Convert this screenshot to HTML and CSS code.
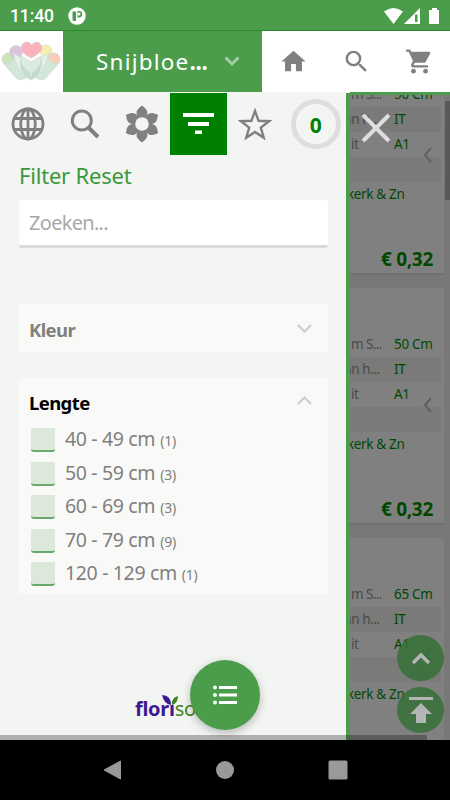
FILE: index.html
```html
<!DOCTYPE html>
<html lang="nl">
<head>
<meta charset="utf-8">
<title>Snijbloemen</title>
<link rel="stylesheet" href="styles.css">
</head>
<body>
<div class="status">
  <span class="clock">11:40</span>
  <svg class="app-dot" width="18" height="18" viewBox="0 0 18 18"><circle cx="9" cy="9" r="8.700" fill="#fff"/><path d="M4.500 4.500H8V14H6Q4.500 14 4.500 12.500ZM9.500 4H11a3.200 3.200 0 0 1 0 6.400H9.500Z" fill="#4b9d4b"/><circle cx="11" cy="7" r="1.500" fill="#fff"/></svg>
  <svg class="signals" width="56" height="18" viewBox="0 0 56 18" fill="#fff"><path d="M0 4.500Q9.500-2.500 19 4.500L9.500 17ZM20 17 36 1V17Z"/><path d="M31 7.500h2.500V15H31Z" fill="#4b9d4b"/><path d="M45 3h3V1h5v2h2v14H45Z"/></svg>
</div>
<header class="header">
  <div class="logo">
    <svg width="60" height="42" viewBox="0 0 60 42" stroke="#c9d5cc" stroke-width=".6">
      <circle cx="7" cy="18" r="6" fill="#cde3b8"/><circle cx="15" cy="11" r="6.500" fill="#dbc2de"/><circle cx="45" cy="10" r="6" fill="#f7efad"/><circle cx="53" cy="18" r="6" fill="#f9cdb8"/>
      <path d="M2 22 16 38Q24 40 27 34L12 17Q12 23 2 22ZM58 22 44 38Q36 40 33 34L48 17Q48 23 58 22Z" fill="#d3e6da"/>
      <path d="M12 12Q27 18 29 38Q18 35 12 12ZM48 12Q33 18 31 38Q42 35 48 12Z" fill="#e5f0e8"/>
      <path d="M20 18Q17 31 30 39Q43 31 40 18L30 24Z" fill="#c1ddcb"/>
      <path d="M30 21 40 15Q42 25 31 32V36H29V32Q18 25 20 15Z" fill="#dcece1"/>
      <path d="M30 17Q20 12 20 7Q21 1 26 1Q29 1 30.500 4Q33 1 36 1Q41 2 41 8Q40 12 30 17Z" fill="#fab1bb"/>
    </svg>
  </div>
  <div class="category"><span class="category-name">Snijbloe<b>...</b></span>
    <svg width="16" height="11" viewBox="0 0 16 11"><path d="m1.500 1.500 6.500 6.500 6.500-6.500" fill="none" stroke="#a3cda3" stroke-width="3"/></svg>
  </div>
  <nav class="tools">
    <svg width="29" height="29" viewBox="0 0 24 24"><path d="M10 20v-6h4v6h5v-8h3L12 3 2 12h3v8z"/></svg>
    <svg width="29" height="29" viewBox="0 0 24 24"><path d="M15.500 14h-.790l-.280-.270A6.470 6.470 0 0 0 16 9.500 6.500 6.500 0 1 0 9.500 16c1.610 0 3.090-.590 4.230-1.570l.270.280v.790l5 4.990L20.490 19zm-6 0a4.500 4.500 0 1 1 0-9 4.500 4.500 0 0 1 0 9"/></svg>
    <svg width="29" height="29" viewBox="0 0 24 24"><circle cx="7" cy="20" r="2"/><circle cx="17" cy="20" r="2"/><path d="M1 2v2h2l3.600 7.590-1.350 2.450C4.520 15.370 5.480 17 7 17h12v-2H7.420a.25.25 0 0 1-.25-.25L8.100 13h7.450c.75 0 1.410-.41 1.750-1.030l3.580-6.490A1 1 0 0 0 20 4H5.210l-.94-2z"/></svg>
  </nav>
</header>
<main class="main">
  <aside class="drawer">
    <div class="tabs">
      <div class="tab"><svg width="34" height="34" viewBox="0 0 34 34" fill="none" stroke="#808080" stroke-width="2.800"><circle cx="17" cy="17" r="15"/><ellipse cx="17" cy="17" rx="7.300" ry="15"/><path d="M17 2v30M3.500 11.500h27M3.500 22.500h27"/></svg></div>
      <div class="tab"><svg width="30" height="30" viewBox="0 0 30 30" fill="none" stroke="#808080"><circle cx="11.800" cy="11.500" r="9.500" stroke-width="3"/><path d="m18.500 18.500 9.500 9.500" stroke-width="4"/></svg></div>
      <div class="tab"><svg width="36" height="38" viewBox="-18 -19 36 38" fill="#808080"><path id="p" d="M-4-7C-8-13-3-16 0-18.500C3-16 8-13 4-7L0 0Z"/><use href="#p" transform="rotate(60)"/><use href="#p" transform="rotate(120)"/><use href="#p" transform="rotate(180)"/><use href="#p" transform="rotate(240)"/><use href="#p" transform="rotate(300)"/><circle r="10"/><circle r="6.800" fill="#f3f5f3"/></svg></div>
      <div class="tab active"><svg width="31" height="22" viewBox="0 0 31 22" fill="#fff"><path d="M0 0h31v4H0zM5 9h21v4H5zM12 17.500h7v3.500h-7z"/></svg></div>
      <div class="tab"><svg width="34" height="32" viewBox="0 0 34 32"><path d="m17 3 3.600 9.800 10.400.4-8.200 6.400 3 10.200L17 24l-8.800 5.800 3-10.200L3 13.200l10.400-.4Z" fill="none" stroke="#808080" stroke-width="2.400"/></svg></div>
      <div class="tab last"><span class="count">0</span></div>
    </div>
    <div class="filters">
      <a class="reset">Filter Reset</a>
      <input class="search" placeholder="Zoeken...">
      <section class="group closed"><h2>Kleur</h2><svg width="15" height="9" viewBox="0 0 15 9"><path d="m1 1 6.500 6.500L14 1"/></svg></section>
      <section class="group open">
        <div class="group-head"><h2>Lengte</h2><svg width="15" height="9" viewBox="0 0 15 9"><path d="m1 8 6.500-6.500L14 8"/></svg></div>
        <label class="option"><i></i><span>40 - 49 cm</span><small>(1)</small></label>
        <label class="option"><i></i><span>50 - 59 cm</span><small>(3)</small></label>
        <label class="option"><i></i><span>60 - 69 cm</span><small>(3)</small></label>
        <label class="option"><i></i><span>70 - 79 cm</span><small>(9)</small></label>
        <label class="option"><i></i><span>120 - 129 cm</span><small>(1)</small></label>
      </section>
    </div>
    <div class="brand"><span>florı</span><span class="soft">so</span>
      <svg class="leaf" width="17" height="12" viewBox="0 0 17 12"><path d="M0 0Q9 0 9 10Q2 9 0 0Z" fill="#3d1a91"/><path d="M10 10Q9 3 16 1Q16 8 10 10Z" fill="#3c861c"/></svg>
    </div>
  </aside>
  <div class="catalog">
    <article class="card">
      <div class="row"><span>m S...</span><b>50 Cm</b></div><div class="row"><span class="cut">an h...</span><b>IT</b></div><div class="row"><span>it</span><b>A1</b></div><div class="row"></div>
      <div class="grower">kerk &amp; Zn</div><div class="price">€ 0,32</div>
      <svg class="prev" width="9" height="16" viewBox="0 0 9 16"><path d="M8 1 2 8l6 7"/></svg>
    </article>
    <article class="card">
      <div class="row"><span>m S...</span><b>50 Cm</b></div><div class="row"><span class="cut">an h...</span><b>IT</b></div><div class="row"><span>it</span><b>A1</b></div><div class="row"></div>
      <div class="grower">kerk &amp; Zn</div><div class="price">€ 0,32</div>
      <svg class="prev" width="9" height="16" viewBox="0 0 9 16"><path d="M8 1 2 8l6 7"/></svg>
    </article>
    <article class="card">
      <div class="row"><span>m S...</span><b>65 Cm</b></div><div class="row"><span class="cut">an h...</span><b>IT</b></div><div class="row"><span>it</span><b>A1</b></div><div class="row"></div>
      <div class="grower">kerk &amp; Zn</div>
      <svg class="prev" width="9" height="16" viewBox="0 0 9 16"><path d="M8 1 2 8l6 7"/></svg>
    </article>
    <div class="scroll-y"></div>
  </div>
  <svg class="close" width="30" height="30" viewBox="0 0 30 30"><path d="m2 2 26 26M28 2 2 28" stroke="#dedede" stroke-width="4"/></svg>
  <div class="jump">
    <span><svg width="20" height="13" viewBox="0 0 20 13"><path d="m2 11 8-8 8 8" fill="none" stroke="#b5b5b5" stroke-width="3.500"/></svg></span>
    <span><svg width="24" height="27" viewBox="0 0 24 27"><path d="M0 0h24v3H0zM12 6l11 11h-6v9H7v-9H1z" fill="#b5b5b5"/></svg></span>
  </div>
  <div class="fab"><svg width="24" height="20" viewBox="0 0 24 20" fill="#fff"><circle cx="2" cy="2.500" r="2"/><circle cx="2" cy="10" r="2"/><circle cx="2" cy="17.500" r="2"/><path d="M6 1h18v3H6zM6 8.500h18v3H6zM6 16h18v3H6z"/></svg></div>
  <div class="scroll-x"></div>
</main>
<footer class="android">
  <svg width="20" height="22" viewBox="0 0 20 22"><path d="M18.500 2v18L2 11Z" stroke="#999" stroke-linejoin="round"/></svg>
  <svg width="20" height="20" viewBox="0 0 20 20"><circle cx="10" cy="10" r="9"/></svg>
  <svg width="20" height="20" viewBox="0 0 20 20"><rect x=".5" y=".5" width="19" height="19" rx="1.500"/></svg>
</footer>
</body>
</html>
```
FILE: styles.css
```css
* { box-sizing: border-box; }
body { margin: 0; width: 450px; height: 800px; overflow: hidden; display: flex; flex-direction: column; background: #4b9d4b; font-family: "Noto Sans", sans-serif; color: #808080; }
svg { display: block; flex: none; }
.status { height: 30px; flex: none; display: flex; align-items: center; padding: 1px 10px 0; color: #fff; }
.clock { font: 500 17.5px/28px Roboto, sans-serif; letter-spacing: -.1px; width: 58px; }
.signals { margin-left: auto; }
.header { height: 62px; flex: none; display: flex; border-top: 1px solid #2c8a2c; }
.logo { width: 63px; background: #fff; display: flex; align-items: center; padding-left: 1px; }
.category { width: 199px; color: #fff; display: flex; align-items: center; padding: 0 0 1px 33px; }
.category-name { font-size: 22.5px; letter-spacing: 1.2px; width: 128px; white-space: nowrap; }
.category-name b { letter-spacing: -.3px; }
.tools { flex: 1; background: #fff; display: flex; align-items: center; padding-left: 17px; gap: 34px; fill: #808080; }
.main { position: relative; height: 648px; flex: none; display: flex; border-top: 1px solid #f3f5f3; }
.drawer { width: 350px; border-right: 4px solid #4b9d4b; background: #f3f5f3; display: flex; flex-direction: column; }
.tabs { display: flex; height: 62px; flex: none; }
.tab { width: 56.7px; flex: none; display: flex; align-items: center; justify-content: center; }
.tab.active { background: #008000; }
.tab.last { width: 62.5px; padding-left: 2px; }
.count { width: 50px; height: 50px; border: 5px solid #dedede; border-radius: 50%; color: #008000; font-size: 21px; font-weight: 700; line-height: 43px; text-align: center; }
.filters { padding: 0 18px 0 19px; display: flex; flex-direction: column; }
.reset { color: #3b973b; font-size: 22px; line-height: 40px; height: 45px; letter-spacing: -.2px; }
.search { height: 48px; border: 0; border-bottom: 3px solid #d9dad9; border-radius: 3px; background: #fff; padding: 0 10px; font: 20px "Noto Sans", sans-serif; letter-spacing: -.7px; }
.search::placeholder { color: #a8a8a8; }
.group { background: #f9faf8; }
.group h2 { margin: 0; font-size: 18.5px; letter-spacing: -.6px; }
.group svg { fill: none; stroke: #cbcccb; stroke-width: 2; }
.closed, .group-head { display: flex; justify-content: space-between; padding: 0 16px 0 10px; }
.closed { height: 48px; margin-top: 56px; line-height: 52px; }
.closed svg { margin-top: 20px; }
.open { height: 216px; margin-top: 26px; }
.group-head { height: 45px; line-height: 50px; color: #000; }
.group-head svg { margin-top: 18px; }
.option { display: flex; height: 33.6px; padding-left: 12px; align-items: baseline; }
.option i { width: 24px; height: 24px; flex: none; align-self: flex-start; margin: 5px 10px 0 0; background: #dce9da; border-bottom: 2px solid #6ba86b; border-radius: 1px 1px 3px 3px; }
.option span { font-size: 19.5px; line-height: 32px; letter-spacing: -.35px; white-space: nowrap; }
.option small { font-size: 14px; margin-left: 5px; letter-spacing: -.2px; }
.brand { position: relative; margin: auto 0 17px 135px; height: 28px; width: 90px; font: 700 20px/28px "Noto Sans", sans-serif; color: #3d1a91; display: flex; letter-spacing: -.3px; }
.brand .soft { font-weight: 400; color: #3c861c; }
.leaf { position: absolute; left: 27px; top: 0; }
.catalog { position: relative; width: 100px; margin-top: -1px; background: #787876; overflow: hidden; border-top: 3px solid #4b9d4b; }
.card { position: relative; width: 94px; height: 237px; margin-bottom: 13px; padding-top: 44px; background: #808080; border-bottom: 2px solid #707070; border-radius: 0 2px 2px 0; font-size: 13.5px; }
.card:first-child { margin-top: -57px; }
.row { height: 25px; line-height: 25px; display: flex; width: 91px; white-space: nowrap; letter-spacing: -.3px; color: #4a4a4a; }
.row:nth-child(even) { background: #7a7a78; }
.row span { width: 44px; padding-left: 1px; letter-spacing: -.6px; }
.row .cut { margin-left: -7px; width: 51px; letter-spacing: -.4px; }
.row b, .grower { font-weight: 400; color: #004800; }
.grower { line-height: 24px; height: 26px; margin-left: -3px; white-space: nowrap; letter-spacing: -.35px; }
.price { color: #004800; font-size: 19px; font-weight: 700; line-height: 28px; margin: 37px 11px 0 0; text-align: right; letter-spacing: -.3px; white-space: nowrap; }
.prev { position: absolute; left: 73px; top: 109px; fill: none; stroke: #5f5f5f; stroke-width: 2; }
.scroll-y { position: absolute; right: 0; top: 6px; width: 5px; height: 99px; background: #595959; }
.close { position: absolute; left: 361px; top: 20px; }
.jump { position: absolute; left: 397px; top: 542px; display: flex; flex-direction: column; gap: 6px; }
.jump span { width: 47px; height: 46px; border-radius: 50%; background: rgba(55, 111, 57, .88); display: flex; align-items: center; justify-content: center; }
.fab { position: absolute; left: 190px; top: 567px; width: 70px; height: 70px; border-radius: 50%; background: #4b9d4b; box-shadow: 0 3px 9px rgba(0, 0, 0, .25); display: flex; align-items: center; justify-content: center; }
.scroll-x { position: absolute; left: 0; bottom: 0; width: 427px; height: 5px; background: rgba(0, 0, 0, .28); }
.android { height: 60px; background: #000; fill: #999; display: flex; justify-content: center; align-items: center; gap: 93px; }
```
